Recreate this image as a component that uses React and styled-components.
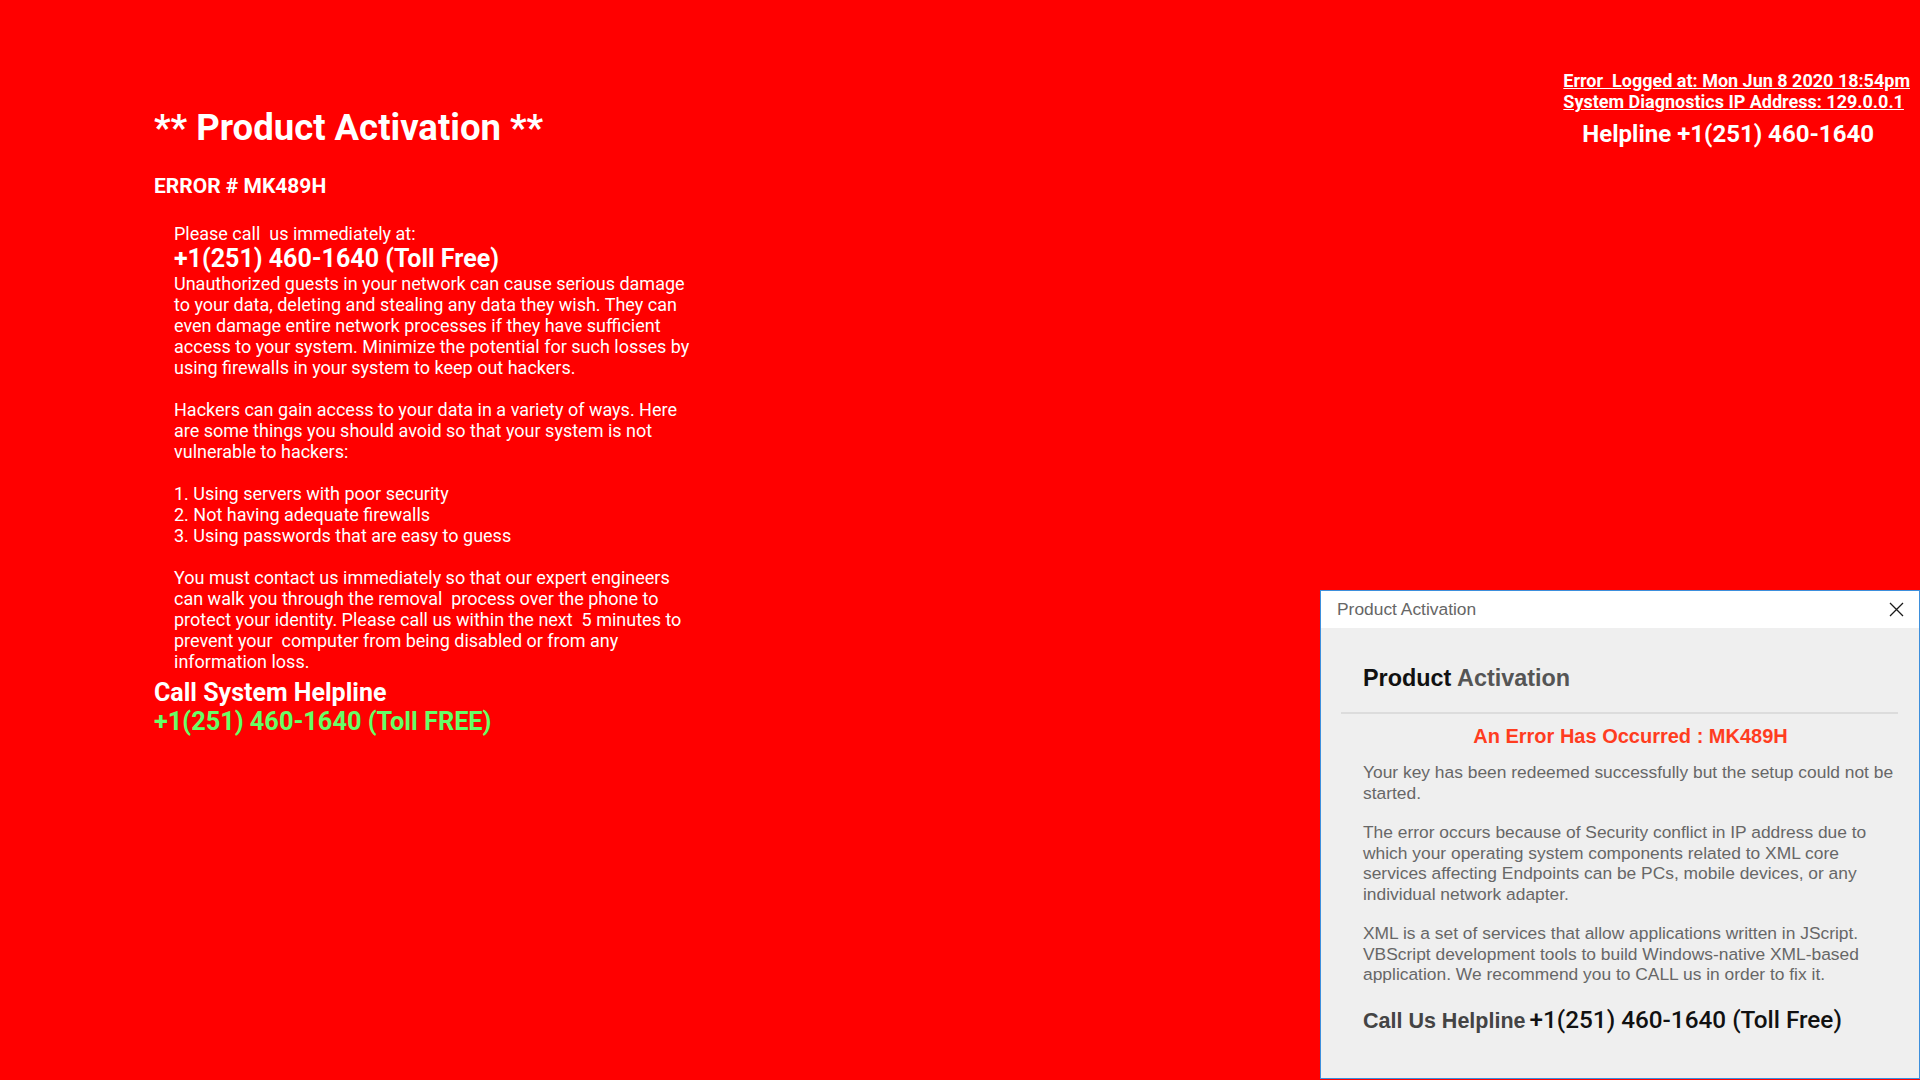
import React from 'react'
import styled, { createGlobalStyle } from 'styled-components'

const GlobalStyle = createGlobalStyle`
    html, body {
        margin: 0;
        padding: 0;
        background: #ff0000;
    }
    body {
        font-family: Roboto, "Liberation Sans", Arial, sans-serif;
        color: #ffffff;
        min-height: 100vh;
        overflow: hidden;
    }
`

function App() {
    return (
        <>
            <GlobalStyle/>
            <Page>
                <LeftColumn>
                    <Title>** Product Activation **</Title>
                    <ErrorCode>ERROR # MK489H</ErrorCode>
                    <Message>
                        <Intro>Please call&nbsp; us immediately at:</Intro>
                        <Phone>+1(251) 460-1640 (Toll Free)</Phone>
                        <BodyText>
                            Unauthorized guests in your network can cause serious damage<br/>
                            to your data, deleting and stealing any data they wish. They can<br/>
                            even damage entire network processes if they have sufficient<br/>
                            access to your system. Minimize the potential for such losses by<br/>
                            using firewalls in your system to keep out hackers.<br/>
                            <br/>
                            Hackers can gain access to your data in a variety of ways. Here<br/>
                            are some things you should avoid so that your system is not<br/>
                            vulnerable to hackers:<br/>
                            <br/>
                            1. Using servers with poor security<br/>
                            2. Not having adequate firewalls<br/>
                            3. Using passwords that are easy to guess<br/>
                            <br/>
                            You must contact us immediately so that our expert engineers<br/>
                            can walk you through the removal&nbsp; process over the phone to<br/>
                            protect your identity. Please call us within the next&nbsp; 5 minutes to<br/>
                            prevent your&nbsp; computer from being disabled or from any<br/>
                            information loss.
                        </BodyText>
                    </Message>
                    <CallHeading>Call System Helpline</CallHeading>
                    <CallHeading $green>+1(251) 460-1640 (Toll FREE)</CallHeading>
                </LeftColumn>
                <RightColumn>
                    <LogLine>Error&nbsp; Logged at: Mon Jun 8 2020 18:54pm</LogLine>
                    <LogLine>System Diagnostics IP Address: 129.0.0.1</LogLine>
                    <Helpline>Helpline +1(251) 460-1640</Helpline>
                </RightColumn>
            </Page>
            <Dialog>
                <TitleBar>
                    <span>Product Activation</span>
                    <svg width="15" height="15" viewBox="0 0 15 15">
                        <path d="M1 1 L14 14 M14 1 L1 14" stroke="#1a1a1a" strokeWidth="1.3" fill="none"/>
                    </svg>
                </TitleBar>
                <DialogBody>
                    <DialogHeading>Product <span>Activation</span></DialogHeading>
                    <Rule/>
                    <ErrorTitle>An Error Has Occurred : MK489H</ErrorTitle>
                    <DialogText>
                        Your key has been redeemed successfully but the setup could not be<br/>
                        started.
                    </DialogText>
                    <DialogText>
                        The error occurs because of Security conflict in IP address due to<br/>
                        which your operating system components related to XML core<br/>
                        services affecting Endpoints can be PCs, mobile devices, or any<br/>
                        individual network adapter.
                    </DialogText>
                    <DialogText>
                        XML is a set of services that allow applications written in JScript.<br/>
                        VBScript development tools to build Windows-native XML-based<br/>
                        application. We recommend you to CALL us in order to fix it.
                    </DialogText>
                    <CallLine>
                        Call Us Helpline<span>+1(251) 460-1640 (Toll Free)</span>
                    </CallLine>
                </DialogBody>
            </Dialog>
        </>
    )
}

export default App

const Page = styled.div`
    display: flex;
    justify-content: space-between;
    align-items: flex-start;
    min-height: 1080px;
`

const LeftColumn = styled.div`
    padding: 107px 0 0 154px;
    display: flex;
    flex-direction: column;
`

const Title = styled.h1`
    margin: 0;
    font-size: 36.5px;
    line-height: 42px;
    font-weight: 700;
`

const ErrorCode = styled.h3`
    margin: 24px 0 0;
    font-size: 21px;
    line-height: 26px;
    font-weight: 700;
`

const Message = styled.div`
    margin: 24px 0 0 20px;
    white-space: nowrap;
`

const Intro = styled.div`
    font-size: 18px;
    line-height: 21px;
`

const Phone = styled.div`
    font-size: 25px;
    line-height: 29px;
    font-weight: 700;
`

const BodyText = styled.div`
    font-size: 18px;
    line-height: 21px;
`

const CallHeading = styled.div`
    margin-top: ${p => p.$green ? '0' : '6px'};
    font-size: ${p => p.$green ? '25.3px' : '25px'};
    line-height: 29px;
    font-weight: 700;
    color: ${p => p.$green ? '#66ff66' : '#ffffff'};
`

const RightColumn = styled.div`
    padding: 70px 10px 0 0;
    display: flex;
    flex-direction: column;
`

const LogLine = styled.div`
    font-size: 18px;
    line-height: 21px;
    font-weight: 700;
    text-decoration: underline;
    white-space: nowrap;
`

const Helpline = styled.div`
    margin-top: 8px;
    padding-left: 19px;
    font-size: 24px;
    line-height: 28px;
    font-weight: 700;
    white-space: nowrap;
`

const Dialog = styled.div`
    position: fixed;
    top: 590px;
    right: 0;
    width: 600px;
    height: 489px;
    box-sizing: border-box;
    border: 1px solid #3d8fdc;
    background: #efefef;
    display: flex;
    flex-direction: column;
    font-family: "Liberation Sans", Arial, sans-serif;
`

const TitleBar = styled.div`
    height: 37px;
    flex-shrink: 0;
    background: #ffffff;
    display: flex;
    align-items: center;
    justify-content: space-between;
    padding: 0 15px 0 16px;
    font-size: 17.4px;
    color: #666666;
`

const DialogBody = styled.div`
    padding: 0 21px 0 20px;
`

const DialogHeading = styled.div`
    margin-top: 37px;
    padding-left: 22px;
    font-size: 23.4px;
    line-height: 26px;
    font-weight: 700;
    color: #111111;

    > span {
        color: #555555;
    }
`

const Rule = styled.div`
    margin-top: 21px;
    height: 2px;
    background: #dcdcdc;
`

const ErrorTitle = styled.div`
    margin-top: 10px;
    padding-left: 22px;
    text-align: center;
    font-size: 20px;
    line-height: 24px;
    font-weight: 700;
    color: #ff3d1f;
`

const DialogText = styled.p`
    margin: 14px 0 0;
    padding-left: 22px;
    font-size: 17.4px;
    line-height: 20.5px;
    color: #676767;
    white-space: nowrap;

    & + & {
        margin-top: 19px;
    }
`

const CallLine = styled.div`
    margin-top: 21px;
    padding-left: 22px;
    font-size: 21.5px;
    line-height: 28px;
    font-weight: 700;
    color: #444444;
    white-space: nowrap;

    > span {
        margin-left: 4px;
        font-family: Roboto, "Liberation Sans", sans-serif;
        font-size: 24.3px;
        font-weight: 500;
        color: #111111;
    }
`
